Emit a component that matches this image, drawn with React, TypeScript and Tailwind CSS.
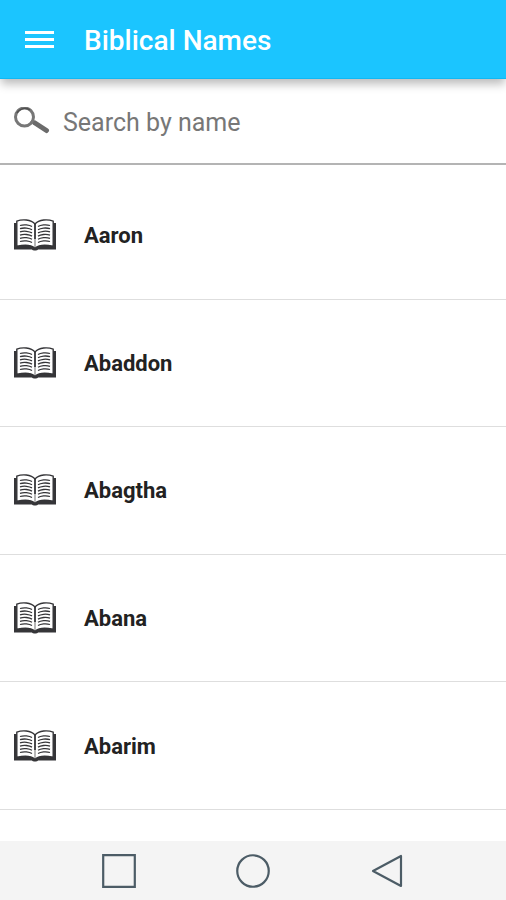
const names = ["Aaron", "Abaddon", "Abagtha", "Abana", "Abarim"];

function BookIcon() {
  return (
    <svg viewBox="0 0 42 32" className="h-8 w-[42px] shrink-0" aria-hidden="true">
      <path d="M0 4h3v22h36V4h3v26.500H24c-.5 1.300-5.500 1.300-6 0H0z" fill="#353538" />
      <path
        d="M2.800 2.200C8 0 17 .2 21 5 25 .2 34 0 39.200 2.200V27.500C32 25.600 25 26 21 29.300 17 26 10 25.600 2.800 27.500z"
        fill="#fff"
        stroke="#353538"
        strokeWidth="1.400"
      />
      <path d="M3 27C10 25.200 17 25.800 21 29c4-3.200 11-3.800 18-2v3H3z" fill="#353538" />
      <path d="M21 4.500v15.500" stroke="#353538" strokeWidth="1.800" />
      <path d="M21 20v8" stroke="#999" strokeWidth="1.400" />
      <g fill="none" stroke="#353538" strokeWidth="1.300">
        {[6.5, 9.7, 12.9, 16.1, 19.3, 22.5].map((y) => (
          <g key={y}>
            <path d={`M6 ${y}q3 -1 6.500 -.6t5.500 1.600`} />
            <path d={`M36 ${y}q-3 -1 -6.500 -.6t-5.500 1.600`} />
          </g>
        ))}
      </g>
    </svg>
  );
}

export default function App() {
  return (
    <div className="flex h-screen flex-col bg-white font-['Roboto',sans-serif]">
      <header className="z-10 flex h-[79px] shrink-0 items-center border-b border-[#10b8f4] bg-[#1bc5ff] pt-0.5 pl-6 shadow-[0_6px_9px_-1px_rgba(0,0,0,0.27)]">
        <button type="button" aria-label="Open menu" className="mr-[30px]">
          <svg viewBox="0 0 30 18" className="h-[18px] w-[30px]" aria-hidden="true">
            <path d="M1 1.500h29M1 8.500h29M1 15.500h29" stroke="#fff" strokeWidth="3" />
          </svg>
        </button>
        <h1 className="pt-0.5 text-[28px] leading-8 font-medium text-white">Biblical Names</h1>
      </header>

      <label className="flex h-[86px] shrink-0 items-center border-b-2 border-[#b4b4b4] px-3.5 pt-0.5">
        <svg viewBox="0 0 36 30" className="mr-[13px] h-[30px] w-9 shrink-0" aria-hidden="true">
          <path d="M21 16l11.500 7.500" stroke="#6b6b6b" strokeWidth="5" strokeLinecap="round" />
          <path d="M17 14l4 2.500" stroke="#6b6b6b" strokeWidth="3" />
          <circle cx="10.500" cy="10" r="9" fill="none" stroke="#777" strokeWidth="3" />
          <path d="M3 6a9 9 0 0 1 13-3" fill="none" stroke="#505050" strokeWidth="1.500" />
        </svg>
        <input
          type="text"
          aria-label="Search by name"
          placeholder="Search by name"
          className="min-w-0 flex-1 pt-0.5 text-[25px] leading-8 text-[#222] outline-none placeholder:text-[#777]"
        />
      </label>

      <main className="min-h-0 flex-1 overflow-y-auto pt-[7px]">
        <ul className="grid h-[638px] grid-rows-5">
          {names.map((name) => (
            <li key={name} className="border-b border-[#dedede]">
              <a href={`#${name}`} className="flex h-full items-center px-3.5">
                <BookIcon />
                <span className="ml-7 pt-0.5 text-[22px] leading-8 font-bold text-[#222]">{name}</span>
              </a>
            </li>
          ))}
        </ul>
      </main>

      <nav className="grid h-[59px] shrink-0 grid-cols-[1fr_100px_1fr] items-center bg-[#f4f4f4]">
        <button type="button" aria-label="Recent apps" className="mr-[67px] justify-self-end">
          <svg viewBox="0 0 34 34" className="size-[34px]" aria-hidden="true">
            <path d="M1.200 1.200h31.600v31.600H1.200z" fill="none" stroke="#4c5c66" strokeWidth="2.200" />
          </svg>
        </button>
        <button type="button" aria-label="Home" className="justify-self-center">
          <svg viewBox="0 0 34 34" className="size-[34px]" aria-hidden="true">
            <circle cx="17" cy="17" r="15.750" fill="none" stroke="#4c5c66" strokeWidth="2.200" />
          </svg>
        </button>
        <button type="button" aria-label="Back" className="ml-[67px] justify-self-start">
          <svg viewBox="0 0 34 34" className="size-[34px]" aria-hidden="true">
            <path d="M31 2v30L3 17z" fill="none" stroke="#4c5c66" strokeWidth="2.200" strokeLinejoin="round" />
          </svg>
        </button>
      </nav>
    </div>
  );
}
